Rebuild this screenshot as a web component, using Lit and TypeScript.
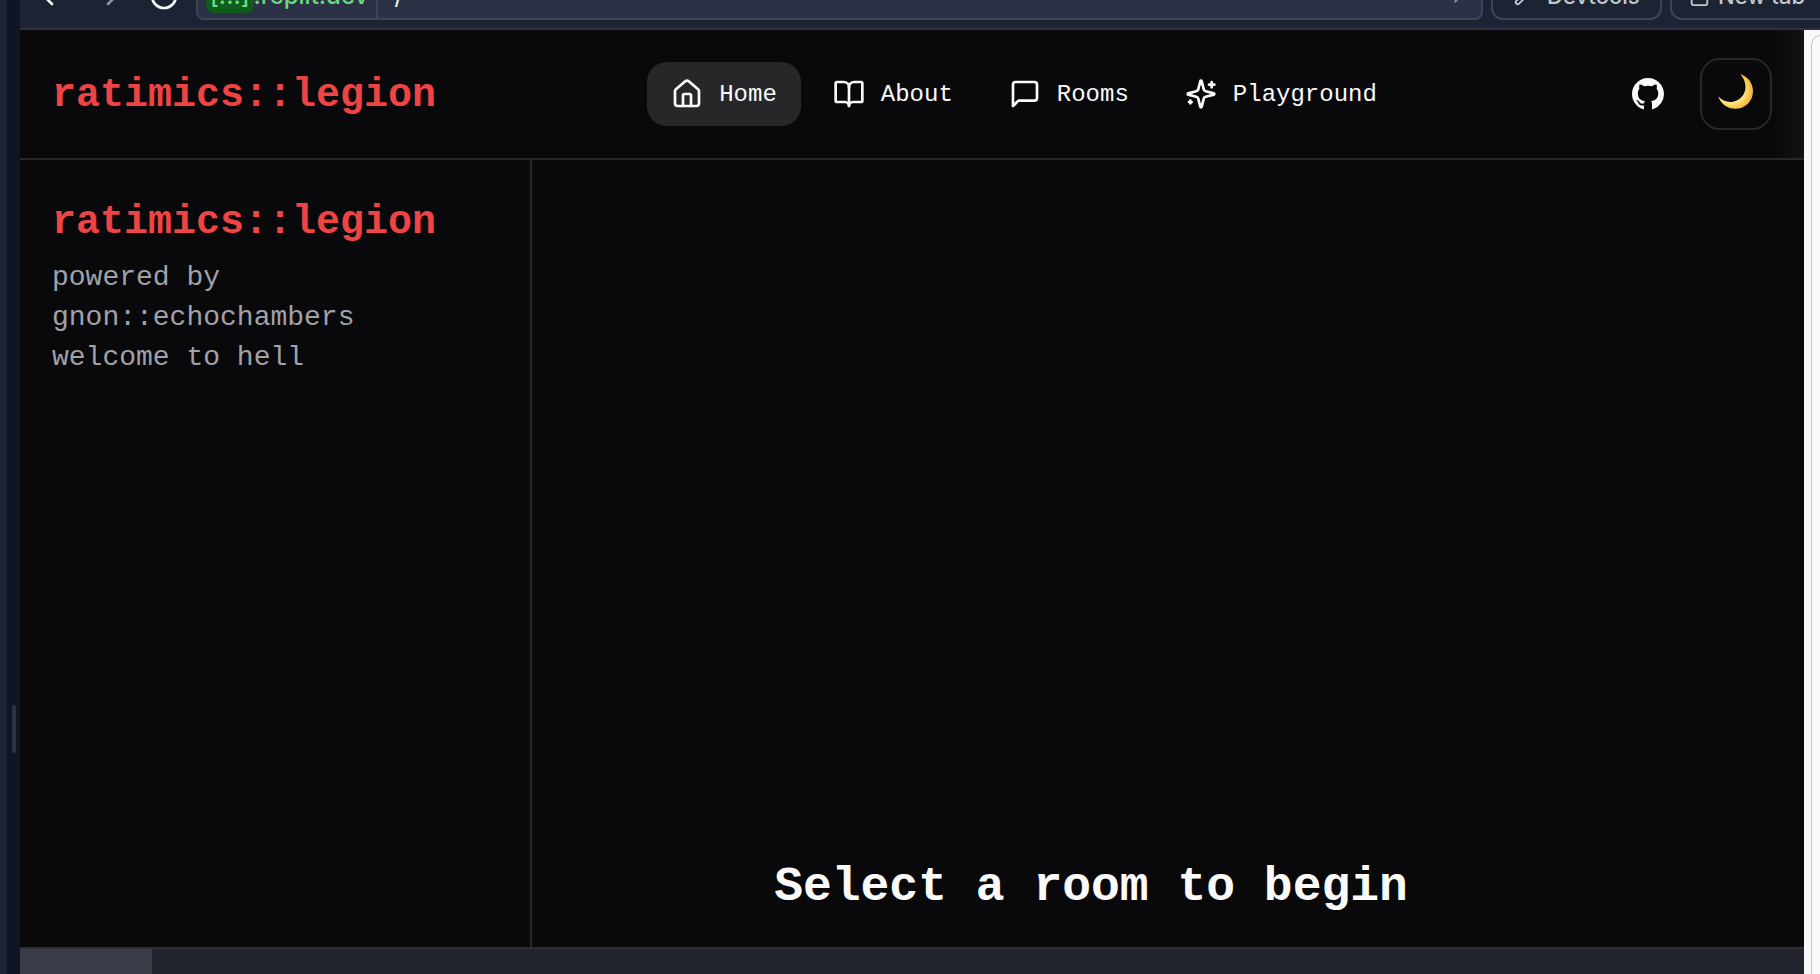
import { LitElement, html, css, svg } from "lit";
import { customElement, property } from "lit/decorators.js";

type IconName = "house" | "book" | "message" | "sparkles" | "chevronLeft" | "chevronRight" | "reload" | "wrench" | "popup";

const GLYPHS: Record<IconName, unknown> = {
  house: svg`<path d="M15 21v-8a1 1 0 0 0-1-1h-4a1 1 0 0 0-1 1v8"/><path d="M3 10a2 2 0 0 1 .709-1.528l7-5.999a2 2 0 0 1 2.582 0l7 5.999A2 2 0 0 1 21 10v9a2 2 0 0 1-2 2H5a2 2 0 0 1-2-2z"/>`,
  book: svg`<path d="M12 7v14"/><path d="M3 18a1 1 0 0 1-1-1V4a1 1 0 0 1 1-1h5a4 4 0 0 1 4 4 4 4 0 0 1 4-4h5a1 1 0 0 1 1 1v13a1 1 0 0 1-1 1h-6a3 3 0 0 0-3 3 3 3 0 0 0-3-3z"/>`,
  message: svg`<path d="M21 15a2 2 0 0 1-2 2H7l-4 4V5a2 2 0 0 1 2-2h14a2 2 0 0 1 2 2z"/>`,
  sparkles: svg`<path d="M9.937 15.500A2 2 0 0 0 8.500 14.063l-6.135-1.582a.5.5 0 0 1 0-.962L8.500 9.936A2 2 0 0 0 9.937 8.500l1.582-6.135a.5.5 0 0 1 .963 0L14.063 8.500A2 2 0 0 0 15.500 9.937l6.135 1.581a.5.5 0 0 1 0 .964L15.500 14.063a2 2 0 0 0-1.437 1.437l-1.582 6.135a.5.5 0 0 1-.963 0z"/><path d="M20 3v4"/><path d="M22 5h-4"/><path d="M4 17v2"/><path d="M5 18H3"/>`,
  chevronLeft: svg`<path d="m15 18-6-6 6-6"/>`,
  chevronRight: svg`<path d="m9 18 6-6-6-6"/>`,
  reload: svg`<path d="M21 12a9 9 0 1 1-9-9c2.500 0 4.900 1 6.700 2.700L21 8"/><path d="M21 3v5h-5"/>`,
  wrench: svg`<path d="M14.700 6.300a1 1 0 0 0 0 1.400l1.600 1.600a1 1 0 0 0 1.400 0l3.770-3.770a6 6 0 0 1-7.940 7.940l-6.910 6.910a2.120 2.120 0 0 1-3-3l6.910-6.910a6 6 0 0 1 7.940-7.940z"/>`,
  popup: svg`<rect x="4" y="5" width="17" height="17" rx="2"/><path d="M4 9h17"/>`,
};

@customElement("line-icon")
class LineIcon extends LitElement {
  @property() name: IconName = "house";
  static styles = css`
    :host { display: block; width: 32px; height: 32px; flex: none; }
    svg { display: block; width: 100%; height: 100%; }
  `;
  render() {
    return html`<svg viewBox="0 0 24 24" fill="none" stroke="currentColor" stroke-width="2" stroke-linecap="round" stroke-linejoin="round" aria-hidden="true">${GLYPHS[this.name]}</svg>`;
  }
}

@customElement("browser-bar")
class BrowserBar extends LitElement {
  static styles = css`
    :host {
      display: flex; align-items: flex-end; box-sizing: border-box; height: 30px; overflow: hidden;
      padding: 0 0 8px 4px; background: #1c2333; border-bottom: 2px solid #2b3245;
      font: 22px/28px Inter, "Liberation Sans", sans-serif; color: #c2c8cc;
    }
    button { font: inherit; color: inherit; background: none; border: 0; padding: 0; cursor: pointer; flex: none; }
    .nav { display: flex; justify-content: center; width: 48px; padding: 8px 0; color: #f5f9fc; }
    .off { color: #8d939e; margin: 0 4px 0 16px; }
    .address {
      flex: 1; display: flex; align-items: center; box-sizing: border-box; height: 48px; min-width: 0;
      margin-left: 8px; border: 2px solid #3c445c; border-radius: 8px; background: #2b3245;
      font-size: 24px;
    }
    .host { display: flex; align-items: center; height: 100%; padding: 0 8px; border-right: 2px solid #3c445c; color: #6cd97e; font-weight: 500; }
    .chip { background: #0f5c1d; border-radius: 8px; padding: 3px 4px; }
    input { flex: 1; min-width: 0; border: 0; background: none; outline: 0; padding: 0 16px; font: inherit; color: #f5f9fc; }
    .open { color: #8d939e; padding: 0 12px; }
    .open line-icon { width: 22px; height: 22px; }
    .tab {
      display: flex; align-items: center; gap: 12px; box-sizing: border-box; height: 48px; width: 171px;
      margin-left: 8px; padding: 0 20px; border: 2px solid #3c445c; border-radius: 12px; white-space: nowrap; font-weight: 500;
    }
    .tab line-icon { width: 22px; height: 22px; }
    .bar-end { margin-right: -21px; padding: 0 16px; gap: 8px; }
  `;
  render() {
    return html`
      <button class="nav" aria-label="Back"><line-icon name="chevronLeft"></line-icon></button>
      <button class="nav off" aria-label="Forward"><line-icon name="chevronRight"></line-icon></button>
      <button class="nav" aria-label="Reload"><line-icon name="reload"></line-icon></button>
      <div class="address">
        <span class="host"><span class="chip">[...]</span>.replit.dev</span>
        <input aria-label="Path" value="/" />
        <button class="open" aria-label="Go"><line-icon name="chevronRight"></line-icon></button>
      </div>
      <button class="tab"><line-icon name="wrench"></line-icon>Devtools</button>
      <button class="tab bar-end"><line-icon name="popup"></line-icon>New tab</button>
    `;
  }
}

@customElement("site-header")
class SiteHeader extends LitElement {
  static styles = css`
    :host {
      display: flex; align-items: center; justify-content: space-between; padding: 28px 32px;
      border-bottom: 2px solid #27272a;
      background: linear-gradient(to left, #131313, #09090b 28px);
    }
    .logo { padding-top: 4px; font-size: 40px; line-height: 56px; font-weight: 700; color: #ef4444; text-decoration: none; }
    nav { display: flex; gap: 8px; }
    .link {
      display: flex; align-items: center; gap: 16px; padding: 16px 24px; border-radius: 20px;
      font-size: 24px; line-height: 32px; color: #fafafa; text-decoration: none;
    }
    .label { padding-top: 2px; line-height: 30px; }
    .active { background: #27272a; }
    .tools { display: flex; align-items: center; gap: 16px; }
    .github { display: block; padding: 20px; color: #fafafa; }
    .github svg { display: block; width: 32px; height: 32px; }
    .theme {
      display: grid; place-items: center; box-sizing: border-box; width: 72px; height: 72px; padding: 0;
      border: 2px solid #27272a; border-radius: 20px; background: #09090b; cursor: pointer;
    }
    .theme svg { display: block; width: 40px; height: 40px; }
  `;
  render() {
    const links: [string, IconName][] = [["Home", "house"], ["About", "book"], ["Rooms", "message"], ["Playground", "sparkles"]];
    return html`
      <a class="logo" href="#">ratimics::legion</a>
      <nav>
        ${links.map(([label, icon], i) => html`<a class="link ${i === 0 ? "active" : ""}" href="#"><line-icon name=${icon}></line-icon><span class="label">${label}</span></a>`)}
      </nav>
      <div class="tools">
        <a class="github" href="#" aria-label="GitHub">
          <svg viewBox="0 0 16 16" fill="currentColor"><path d="M8 0C3.580 0 0 3.580 0 8c0 3.540 2.290 6.530 5.470 7.590.4.070.55-.17.55-.38 0-.19-.01-.82-.01-1.490-2.010.37-2.530-.49-2.690-.94-.09-.23-.48-.94-.82-1.130-.28-.15-.68-.52-.01-.53.63-.01 1.080.58 1.230.82.72 1.210 1.870.87 2.330.66.07-.52.28-.87.51-1.070-1.780-.2-3.640-.89-3.640-3.950 0-.87.31-1.590.82-2.150-.08-.2-.36-1.020.08-2.120 0 0 .67-.21 2.200.82.64-.18 1.320-.27 2-.27s1.360.09 2 .27c1.530-1.040 2.200-.82 2.200-.82.44 1.100.16 1.920.08 2.120.51.56.82 1.270.82 2.150 0 3.070-1.870 3.750-3.650 3.950.29.25.54.73.54 1.480 0 1.070-.01 1.930-.01 2.200 0 .21.15.46.55.38A8.010 8.010 0 0 0 16 8c0-4.420-3.580-8-8-8z"/></svg>
        </a>
        <button class="theme" aria-label="Toggle theme">
          <svg viewBox="0 0 40 40">
            <defs>
              <radialGradient id="moon" cx="15" cy="16" r="22" gradientUnits="userSpaceOnUse">
                <stop offset="0.500" stop-color="#fff0a0"/><stop offset="0.750" stop-color="#fbd15b"/><stop offset="1" stop-color="#eeb03c"/>
              </radialGradient>
            </defs>
            <path fill="url(#moon)" d="M24.300 0C32 2.500 37 9.300 37 17.200 37 27 29.400 34.800 19.500 34.800 11.500 34.800 4.500 30 2.300 22.300 5.500 26.200 9.500 28 14.200 28 22.800 28 29.500 21.300 29.500 13 29.500 8 27.500 3.700 24.300 0z"/>
          </svg>
        </button>
      </div>
    `;
  }
}

@customElement("app-root")
class AppRoot extends LitElement {
  static styles = css`
    :host {
      display: grid; grid-template-columns: 7px 13px minmax(0, 1fr); min-height: 100vh;
      background: #09090b; color: #fafafa; font-family: "Liberation Mono", monospace;
    }
    .edge { background: #1c2333; }
    .splitter { background: #0e1525; display: flex; flex-direction: column; align-items: center; justify-content: center; }
    .grip { width: 4px; height: 48px; border-radius: 2px; background: #2b3245; margin-top: 484px; }
    .window { display: flex; flex-direction: column; min-width: 0; }
    .view { flex: 1; display: flex; min-height: 0; }
    .page { flex: 1; display: flex; flex-direction: column; min-width: 0; }
    .body { flex: 1; display: flex; }
    aside { box-sizing: border-box; width: 512px; flex: none; padding: 32px; border-right: 2px solid #27272a; }
    h1, h2, p { margin: 0; }
    h1 { font-size: 40px; line-height: 62px; font-weight: 700; color: #ef4444; }
    .intro { margin-top: 4px; font-size: 28px; line-height: 40px; color: #a1a1aa; }
    main { flex: 1; display: flex; align-items: flex-end; justify-content: center; padding: 0 154px 30px 0; }
    h2 { font-size: 48px; line-height: 60px; font-weight: 700; }
    .status { display: flex; height: 25px; background: #21242d; border-top: 2px solid #2d3037; }
    .status-tab { width: 132px; background: #3a3d48; }
    .gutter { width: 16px; flex: none; background: #f8f8f8; overflow: hidden; display: flex; padding-top: 5px; box-sizing: border-box; }
    .sheet { width: 32px; flex: none; margin-left: 7px; border: 1px solid #c4c4c4; border-bottom: 0; border-radius: 10px 0 0 0; background: #fafafa; }
  `;
  render() {
    return html`
      <div class="edge"></div>
      <div class="splitter"><div class="grip"></div></div>
      <div class="window">
        <browser-bar></browser-bar>
        <div class="view">
          <div class="page">
            <site-header></site-header>
            <div class="body">
              <aside>
                <h1>ratimics::legion</h1>
                <p class="intro">powered by<br />gnon::echochambers<br />welcome to hell</p>
              </aside>
              <main><h2>Select a room to begin</h2></main>
            </div>
            <div class="status"><div class="status-tab"></div></div>
          </div>
          <div class="gutter"><div class="sheet"></div></div>
        </div>
      </div>
    `;
  }
}
